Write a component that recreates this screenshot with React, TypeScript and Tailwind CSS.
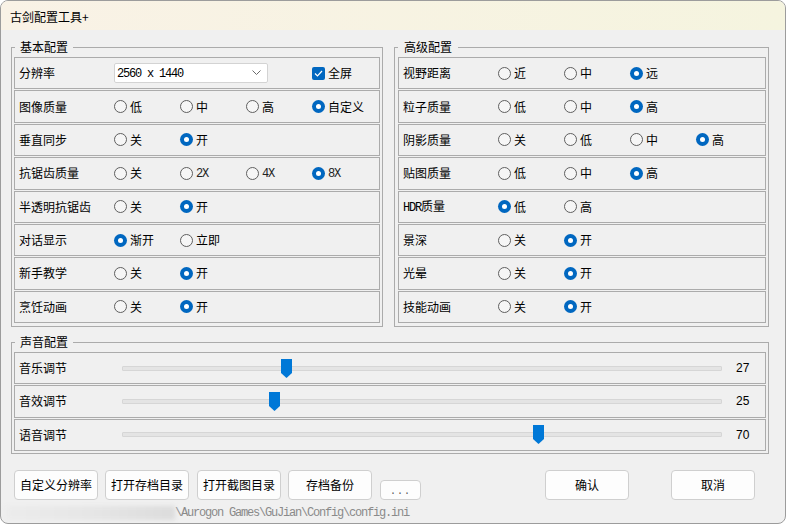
import React from 'react';

type Opt = { label: string; mono?: boolean };

interface RowProps {
  label: React.ReactNode;
  options: Opt[];
  checked: number;
}

const cjk = { fontFamily: '"Noto Sans CJK SC", "Noto Sans", sans-serif' };
const mono = { fontFamily: '"Liberation Mono", "DejaVu Sans Mono", monospace' };

// Radio estilo Windows 11
function Radio({ checked }: { checked?: boolean }) {
  if (checked) {
    return (
      <span className="flex h-[13px] w-[13px] shrink-0 items-center justify-center rounded-full bg-[#0067c0]">
        <span className="h-[5px] w-[5px] rounded-full bg-white" />
      </span>
    );
  }
  return <span className="h-[13px] w-[13px] shrink-0 rounded-full border border-[#5f5f5f] bg-[#f6f6f6]" />;
}

function OptionRow({ label, options, checked }: RowProps) {
  return (
    <div className="flex items-center border border-[#ababab] pl-[4px]">
      <div className="w-[95px] text-[12px] leading-[16px] text-black">{label}</div>
      {options.map((o, i) => (
        <div key={i} className="flex w-[66px] items-center gap-[3px]">
          <Radio checked={i === checked} />
          {o.mono ? (
            <span className="translate-y-[1px] text-[12px] leading-[16px] tracking-[-1.2px] text-[#222]" style={mono}>
              {o.label}
            </span>
          ) : (
            <span className="text-[12px] leading-[16px] text-black">{o.label}</span>
          )}
        </div>
      ))}
    </div>
  );
}

const opts = (...labels: string[]): Opt[] => labels.map((l) => ({ label: l }));

function SliderRow({ label, value }: { label: string; value: number }) {
  // centro do thumb: 6px ate 593px dentro da trilha de 600px
  const left = 6 + value * 5.87 - 5.5;
  return (
    <div className="flex items-center border border-[#ababab] pl-[4px]">
      <div className="w-[103px] text-[12px] leading-[16px] text-black">{label}</div>
      <div className="relative h-[31px] w-[600px]">
        <div className="absolute left-0 right-0 top-[13px] h-[5px] rounded-[1px] border border-[#d6d6d6] bg-[#e4e4e4]" />
        <svg
          className="absolute top-[6px]"
          style={{ left }}
          width="11"
          height="19"
          viewBox="0 0 11 19"
        >
          <polygon points="0,0 11,0 11,14 5.5,19 0,14" fill="#0078d7" />
        </svg>
      </div>
      <div
        className="ml-[14px] text-[12px] leading-[16px] text-black"
        style={{ fontFamily: '"Liberation Sans", Arial, sans-serif' }}
      >
        {value}
      </div>
    </div>
  );
}

function Btn({ children, w = 'w-[84px]' }: { children: React.ReactNode; w?: string }) {
  return (
    <button
      className={`flex h-[30px] ${w} items-center justify-center rounded-[4px] border border-[#cfcfcf] bg-[#fdfdfd] text-[12px] leading-[16px] text-black`}
    >
      {children}
    </button>
  );
}

export default function App() {
  return (
    <div className="h-[526px] w-[787px] bg-white" style={cjk}>
      <div className="flex h-[524px] w-[786px] flex-col overflow-hidden rounded-[8px] border border-[#9c9c9c] bg-[#f0f0f0]">
        {/* Barra de titulo */}
        <div className="flex h-[29px] shrink-0 items-center bg-gradient-to-r from-[#f9f2e6] to-[#f5f4df] pl-[9px] pt-[2px] text-[12px] text-black">
          古剑配置工具+
        </div>

        <div className="flex flex-col pl-[10px] pt-[9px]">
          <div className="flex gap-[11px]">
            {/* 基本配置 */}
            <fieldset className="w-[372px] border border-[#ababab] px-[2px] pb-[3px] pt-[2px]">
              <legend className="ml-[1px] px-[5px] text-[12px] leading-[16px] text-black">基本配置</legend>
              <div className="grid h-[266px] grid-rows-8 gap-[1px]">
                <div className="flex items-center border border-[#ababab] pl-[4px]">
                  <div className="w-[95px] text-[12px] leading-[16px] text-black">分辨率</div>
                  <div className="flex h-[20px] w-[154px] items-center justify-between rounded-[2px] border border-[#d3d3d3] bg-white pl-[2px] pr-[6px]">
                    <span className="translate-y-[1px] text-[12px] leading-[16px] tracking-[-1.2px] text-black" style={mono}>
                      2560 x 1440
                    </span>
                    <svg width="9" height="6" viewBox="0 0 9 6">
                      <polyline points="0.5,0.5 4.5,4.5 8.5,0.5" fill="none" stroke="#6a6a6a" strokeWidth="1" />
                    </svg>
                  </div>
                  <div className="ml-[44px] flex items-center gap-[3px]">
                    <span className="flex h-[13px] w-[13px] items-center justify-center rounded-[2px] bg-[#0067c0]">
                      <svg width="9" height="7" viewBox="0 0 9 7">
                        <polyline points="1,3.5 3.5,6 8,1" fill="none" stroke="white" strokeWidth="1.2" />
                      </svg>
                    </span>
                    <span className="text-[12px] leading-[16px] text-black">全屏</span>
                  </div>
                </div>
                <OptionRow label="图像质量" options={opts('低', '中', '高', '自定义')} checked={3} />
                <OptionRow label="垂直同步" options={opts('关', '开')} checked={1} />
                <OptionRow
                  label="抗锯齿质量"
                  options={[{ label: '关' }, { label: '2X', mono: true }, { label: '4X', mono: true }, { label: '8X', mono: true }]}
                  checked={3}
                />
                <OptionRow label="半透明抗锯齿" options={opts('关', '开')} checked={1} />
                <OptionRow label="对话显示" options={opts('渐开', '立即')} checked={0} />
                <OptionRow label="新手教学" options={opts('关', '开')} checked={1} />
                <OptionRow label="烹饪动画" options={opts('关', '开')} checked={1} />
              </div>
            </fieldset>

            {/* 高级配置 */}
            <fieldset className="w-[375px] border border-[#ababab] pb-[3px] pl-[3px] pr-[2px] pt-[2px]">
              <legend className="px-[6px] text-[12px] leading-[16px] text-black">高级配置</legend>
              <div className="grid h-[266px] grid-rows-8 gap-[1px]">
                <OptionRow label="视野距离" options={opts('近', '中', '远')} checked={2} />
                <OptionRow label="粒子质量" options={opts('低', '中', '高')} checked={2} />
                <OptionRow label="阴影质量" options={opts('关', '低', '中', '高')} checked={3} />
                <OptionRow label="贴图质量" options={opts('低', '中', '高')} checked={2} />
                <OptionRow
                  label={
                    <span>
                      <span className="tracking-[-1.2px]" style={mono}>HDR</span>质量
                    </span>
                  }
                  options={opts('低', '高')}
                  checked={0}
                />
                <OptionRow label="景深" options={opts('关', '开')} checked={1} />
                <OptionRow label="光晕" options={opts('关', '开')} checked={1} />
                <OptionRow label="技能动画" options={opts('关', '开')} checked={1} />
              </div>
            </fieldset>
          </div>

          {/* 声音配置 */}
          <fieldset className="mt-[7px] w-[758px] border border-[#ababab] px-[2px] pb-[2px] pt-[2px]">
            <legend className="ml-[1px] px-[5px] text-[12px] leading-[16px] text-black">声音配置</legend>
            <div className="grid h-[99px] grid-rows-3 gap-[1px]">
              <SliderRow label="音乐调节" value={27} />
              <SliderRow label="音效调节" value={25} />
              <SliderRow label="语音调节" value={70} />
            </div>
          </fieldset>

          {/* Botoes */}
          <div className="mt-[16px] flex items-start pl-[3px]">
            <Btn>自定义分辨率</Btn>
            <div className="ml-[7px]"><Btn>打开存档目录</Btn></div>
            <div className="ml-[8px]"><Btn>打开截图目录</Btn></div>
            <div className="ml-[7px]"><Btn>存档备份</Btn></div>
            <button
              className="ml-[8px] mt-[10px] flex h-[20px] w-[41px] items-end justify-center rounded-[4px] border border-[#cfcfcf] bg-[#fdfdfd] pb-[2px] text-[10px] leading-[10px] tracking-[1px] text-[#555]"
              style={mono}
            >
              ...
            </button>
            <div className="ml-[124px]"><Btn>确认</Btn></div>
            <div className="ml-[42px]"><Btn>取消</Btn></div>
          </div>

          {/* Caminho do arquivo */}
          <div className="mt-[5px] flex h-[16px] items-center">
            <div className="-ml-[6px] h-[14px] w-[170px] bg-gradient-to-r from-[#ececec] via-[#e6e6e6] to-[#dcdcdc] blur-[2px]" />
            <span className="text-[12px] leading-[16px] tracking-[-1.2px] text-[#8a8a8a]" style={mono}>
              \Aurogon Games\GuJian\Config\config.ini
            </span>
          </div>
        </div>
      </div>
    </div>
  );
}
